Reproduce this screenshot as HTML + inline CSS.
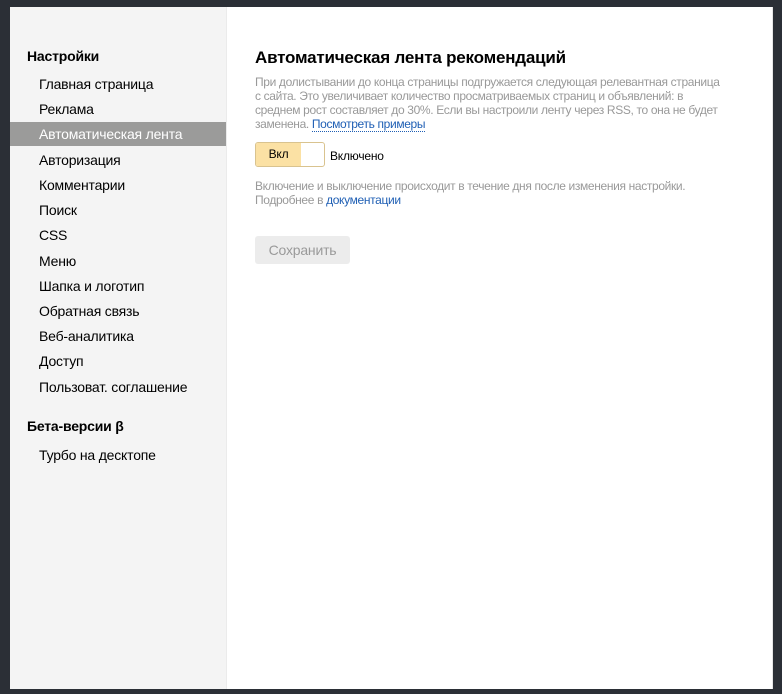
<!DOCTYPE html>
<html><head><meta charset="utf-8"><style>
*{margin:0;padding:0;box-sizing:border-box}
body{width:782px;height:694px;background:#2b2f36;font-family:"Liberation Sans",Arial,sans-serif;position:relative;overflow:hidden;letter-spacing:-0.2px}
.frame{position:absolute;left:10px;top:7px;width:763px;height:682px;background:#fff;border-right:1px solid #e6e6e6}
.side{position:absolute;left:0;top:0;width:217px;height:100%;background:#f4f4f4;border-right:1px solid #ebebeb}
.h{position:absolute;left:17px;font-size:14px;font-weight:bold;color:#000}
.it{position:absolute;left:0;width:216px;height:24px;line-height:24px;padding-left:29px;font-size:14px;color:#000}
.it.a{background:#9b9b9a;color:#fff}
.main{position:absolute;left:245px;top:0}
h1{position:absolute;top:41px;left:0;font-size:17px;font-weight:bold;white-space:nowrap;color:#000}
.p{position:absolute;left:0;font-size:12px;line-height:14px;color:#999;width:500px;letter-spacing:-0.35px}
a{color:#1f5fb4;text-decoration:none}
.tog{position:absolute;top:135px;left:0;width:70px;height:25px;border:1px solid #d9c38f;border-radius:3px;background:#fff;overflow:hidden}
.tog .on{position:absolute;left:0;top:0;width:45px;height:23px;background:#fbe1a4;font-size:12px;line-height:23px;text-align:center;color:#000}
.btn{position:absolute;top:229px;left:0;width:95px;height:28px;background:#ececec;border-radius:3px;font-size:14px;line-height:28px;text-align:center;color:#9a9a9a}
</style></head><body>
<div class="frame">
<div class="side">
<div class="h" style="top:41px">Настройки</div>
<div class="it" style="top:65px">Главная страница</div>
<div class="it" style="top:90px">Реклама</div>
<div class="it a" style="top:115px">Автоматическая лента</div>
<div class="it" style="top:141px">Авторизация</div>
<div class="it" style="top:166px">Комментарии</div>
<div class="it" style="top:191px">Поиск</div>
<div class="it" style="top:216px">CSS</div>
<div class="it" style="top:242px">Меню</div>
<div class="it" style="top:267px">Шапка и логотип</div>
<div class="it" style="top:292px">Обратная связь</div>
<div class="it" style="top:317px">Веб-аналитика</div>
<div class="it" style="top:342px">Доступ</div>
<div class="it" style="top:368px">Пользоват. соглашение</div>
<div class="h" style="top:411px">Бета-версии β</div>
<div class="it" style="top:436px">Турбо на десктопе</div>
</div>
<div class="main">
<h1>Автоматическая лента рекомендаций</h1>
<div class="p" style="top:68px">При долистывании до конца страницы подгружается следующая релевантная страница<br>с сайта. Это увеличивает количество просматриваемых страниц и объявлений: в<br>среднем рост составляет до 30%. Если вы настроили ленту через RSS, то она не будет<br>заменена. <a href="#" style="border-bottom:1px dotted #1f5fb4">Посмотреть примеры</a></div>
<div class="tog"><div class="on">Вкл</div></div>
<div style="position:absolute;top:142px;left:75px;font-size:12px;color:#000;white-space:nowrap">Включено</div>
<div class="p" style="top:172px;width:520px">Включение и выключение происходит в течение дня после изменения настройки.<br>Подробнее в <a href="#">документации</a></div>
<div class="btn">Сохранить</div>
</div>
</div>
</body></html>
